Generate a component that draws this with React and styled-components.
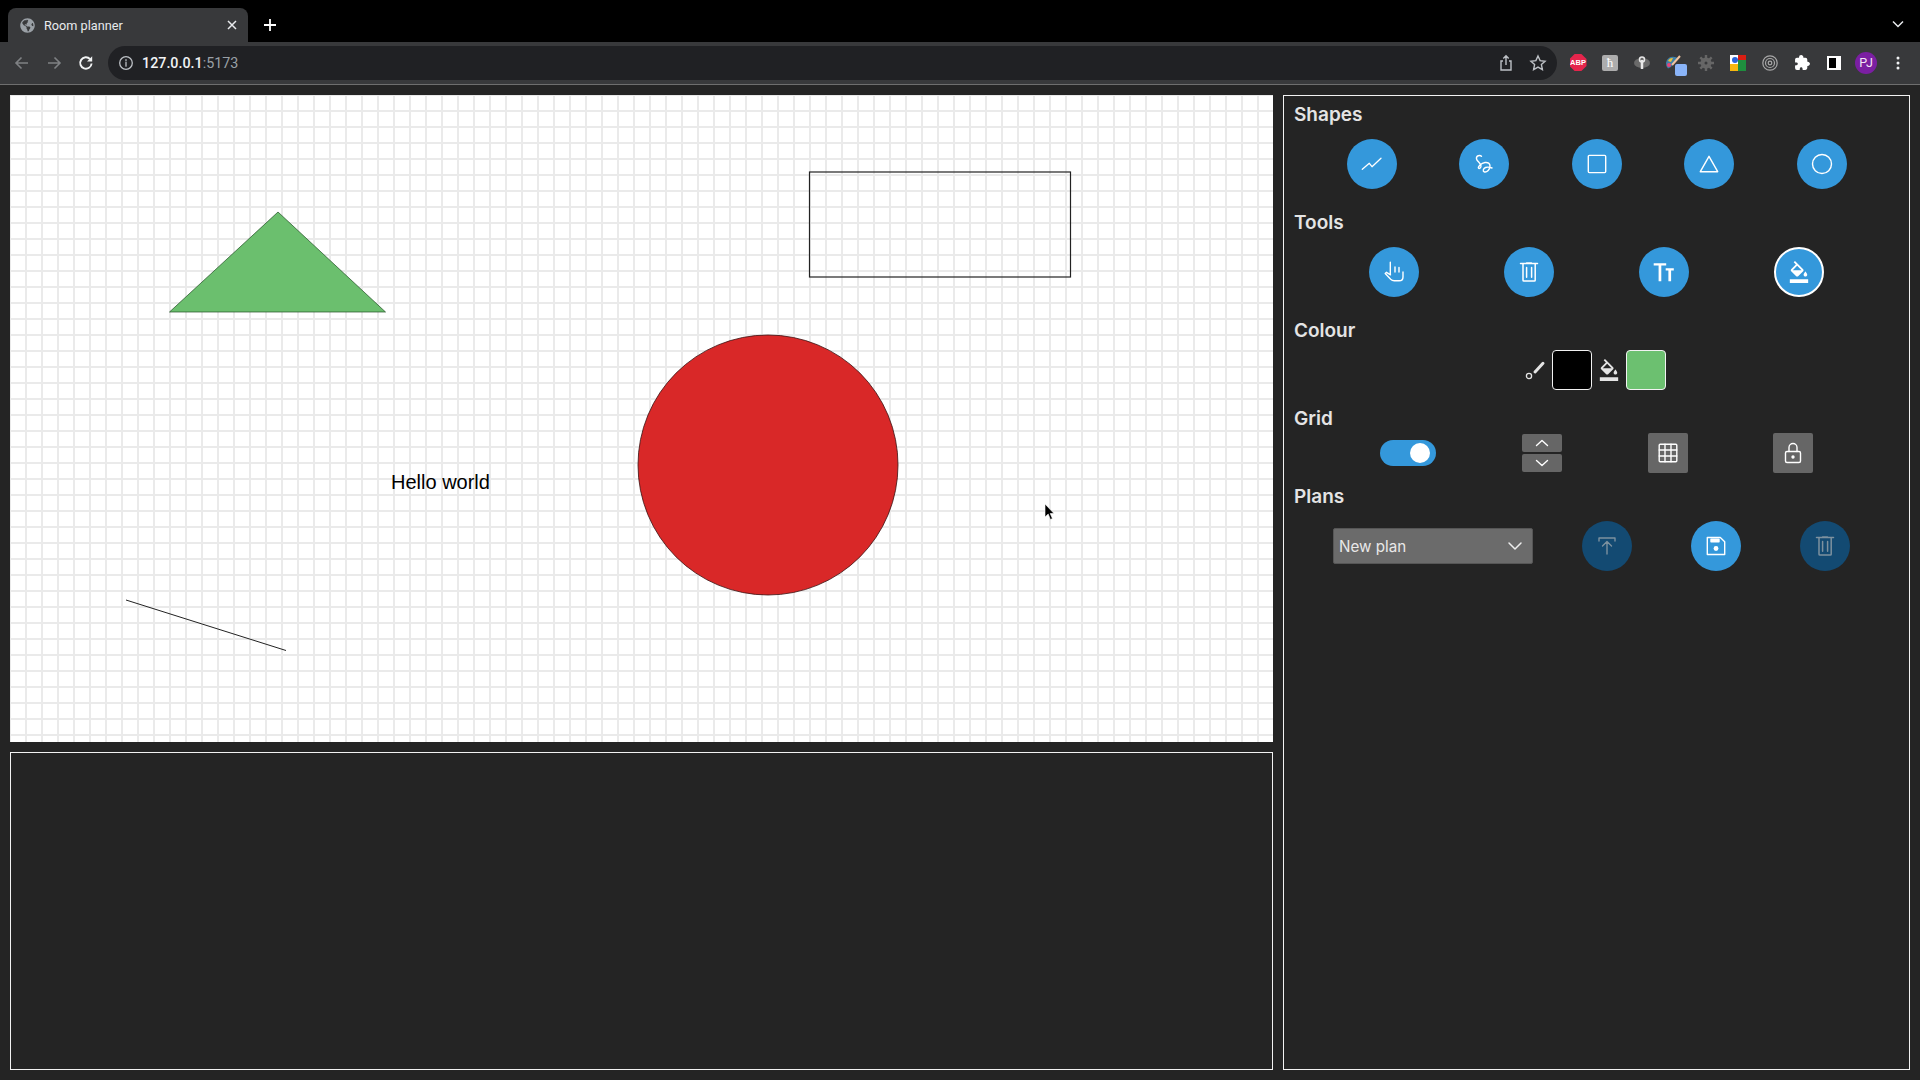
import React from "react";
import styled, { createGlobalStyle } from "styled-components";
import { MdFormatColorFill } from "react-icons/md";
import { FaGlobeAmericas } from "react-icons/fa";
import { IoExtensionPuzzle } from "react-icons/io5";

const Global = createGlobalStyle`
  html, body { margin: 0; padding: 0; background: #242424; }
  body { font-family: Inter, "Noto Sans", sans-serif; overflow: hidden; }
  * { box-sizing: border-box; }
`;

const Window = styled.div`
  width: 1920px;
  height: 1080px;
  display: flex;
  flex-direction: column;
`;

const TabStrip = styled.div`
  height: 42px;
  background: #000;
  display: flex;
  align-items: flex-end;
  padding-left: 8px;
`;

const Tab = styled.div`
  width: 240px;
  height: 34px;
  background: #38393b;
  border-radius: 8px 8px 0 0;
  display: flex;
  align-items: center;
  padding: 0 5px 0 12px;
  color: #e8eaed;
  font: 400 12.7px Roboto, sans-serif;
  svg { color: #9aa0a6; margin-right: 9px; }
`;

const TabTitle = styled.span`
  flex: 1;
`;

const TabClose = styled.svg`
  width: 10px;
  height: 10px;
  margin: 0 6px 0 0 !important;
  color: #e8eaed !important;
`;

const NewTab = styled.svg`
  width: 14px;
  height: 14px;
  margin: 0 0 10px 15px;
`;

const TabMenu = styled.svg`
  width: 12px;
  height: 8px;
  margin: 0 16px 14px auto;
`;

const Toolbar = styled.div`
  height: 43px;
  background: #38393b;
  border-bottom: 1px solid #6e6e6e;
  display: flex;
  align-items: center;
  padding: 0 6px 1px 0;
`;

const NavButton = styled.svg`
  width: 18px;
  height: 18px;
  margin-left: ${(p) => p.$left}px;
  color: ${(p) => p.$color};
  flex: none;
`;

const UrlBar = styled.div`
  margin-left: 13px;
  width: 1449px;
  height: 34px;
  border-radius: 17px;
  background: #202124;
  display: flex;
  align-items: center;
  padding: 0 0 0 10px;
  flex: none;
`;

const UrlHost = styled.span`
  margin-left: 8px;
  font: 500 14.3px Roboto, sans-serif;
  color: #f1f3f4;
  flex: 1;
  span { color: #9aa0a6; font-weight: 400; }
`;

const UrlAction = styled.svg`
  width: 18px;
  height: 18px;
  margin-right: 14px;
  color: #bdc1c6;
  &:last-child { margin-right: 10px; }
`;

const Extensions = styled.div`
  display: flex;
  margin-left: 5px;
`;

const Slot = styled.div`
  width: 32px;
  height: 32px;
  display: flex;
  align-items: center;
  justify-content: center;
  position: relative;
`;

const AbpBadge = styled.div`
  width: 17px;
  height: 17px;
  background: #e5254c;
  clip-path: polygon(30% 0, 70% 0, 100% 30%, 100% 70%, 70% 100%, 30% 100%, 0 70%, 0 30%);
  color: #fff;
  font: 700 7.5px "Liberation Sans", sans-serif;
  display: flex;
  align-items: center;
  justify-content: center;
`;

const KeyBadge = styled.div`
  width: 16px;
  height: 16px;
  border-radius: 2px;
  background: #adadad;
  color: #fff;
  font: 400 13px "Liberation Serif", serif;
  display: flex;
  align-items: center;
  justify-content: center;
`;

const CountBadge = styled.div`
  position: absolute;
  left: 17px;
  top: 17px;
  width: 12px;
  height: 12px;
  border-radius: 2px;
  background: #8ab4f8;
`;

const Avatar = styled.div`
  width: 22px;
  height: 22px;
  border-radius: 50%;
  background: #7b1fa2;
  color: #f3e5f5;
  font: 400 12.5px Roboto, sans-serif;
  display: flex;
  align-items: center;
  justify-content: center;
`;

const SidePanelGlyph = styled.div`
  width: 14px;
  height: 14px;
  background: #000;
  border: 2px solid #fff;
  border-right-width: 5px;
`;

const Page = styled.div`
  flex: 1;
  min-height: 0;
  background: #242424;
  padding: 10px;
  display: grid;
  grid-template-columns: 1263px 627px;
  grid-template-rows: 647px 1fr;
  gap: 10px;
`;

const Canvas = styled.div`
  position: relative;
  background-color: #fff;
  background-image:
    linear-gradient(#eaeaea 2px, transparent 2px),
    linear-gradient(90deg, #eaeaea 2px, transparent 2px);
  background-size: 16px 16px;
  background-position: 15px 15px;
  overflow: hidden;
`;

const CanvasDrawing = styled.svg`
  position: absolute;
  inset: 0;
  width: 100%;
  height: 100%;
`;

const CanvasText = styled.span`
  position: absolute;
  left: 381px;
  top: 375px;
  font: 400 20px/24px "Liberation Sans", Arial, sans-serif;
  color: #000;
`;

const Cursor = styled.svg`
  position: absolute;
  left: 1034px;
  top: 408px;
  width: 12px;
  height: 18px;
`;

const Console = styled.div`
  border: 1px solid #f2f2f2;
  background: #242424;
`;

const SidePanel = styled.div`
  grid-column: 2;
  grid-row: 1 / span 2;
  border: 1px solid #f2f2f2;
  background: #242424;
  padding-top: 8px;
`;

const Heading = styled.h2`
  margin: 0 0 0 10px;
  font: 600 19px/22px Inter, sans-serif;
  color: #e4e4e4;
`;

const EvenRow = styled.div`
  display: flex;
  justify-content: space-evenly;
  align-items: center;
  margin: 13px 0 23px;
`;

const ColourRow = styled.div`
  display: flex;
  justify-content: center;
  align-items: center;
  margin: 8px 0 18px;
  padding-right: 6px;
`;

const GridRow = styled.div`
  display: flex;
  align-items: center;
  gap: 85.7px;
  padding-left: 96.3px;
  margin: 3px 0 13px;
`;

const PlansRow = styled.div`
  display: flex;
  align-items: center;
  gap: 59px;
  padding-left: 49px;
  margin-top: 13px;
`;

const RoundButton = styled.button`
  width: 50px;
  height: 50px;
  border-radius: 50%;
  padding: 0;
  border: ${(p) => (p.$active ? "2px solid #fff" : "none")};
  background: ${(p) => (p.$dim ? "#134a72" : "#3498db")};
  color: ${(p) => (p.$dim ? "#7d919f" : "#fff")};
  display: flex;
  align-items: center;
  justify-content: center;
  flex: none;
`;

const Icon = styled.svg`
  width: ${(p) => p.$size || 24}px;
  height: ${(p) => p.$size || 24}px;
  fill: none;
  stroke: currentColor;
  stroke-width: ${(p) => p.$weight || 1.5};
  stroke-linecap: round;
  stroke-linejoin: round;
  flex: none;
`;

const SolidIcon = styled(Icon)`
  fill: currentColor;
  stroke: none;
`;

const Swatch = styled.div`
  width: 40px;
  height: 40px;
  border: 1px solid #f2f2f2;
  border-radius: 4px;
  background: ${(p) => p.$color};
  margin: 0 ${(p) => p.$right || 0}px 0 ${(p) => p.$left || 4}px;
`;

const ColourGlyph = styled.div`
  width: 24px;
  height: 24px;
  color: #e4e4e4;
  display: flex;
  align-items: center;
  justify-content: center;
`;

const BrushGlyph = styled(ColourGlyph)`
  margin-right: 2px;
`;

const Toggle = styled.div`
  width: 56px;
  height: 26px;
  border-radius: 13px;
  background: #3498db;
  display: flex;
  align-items: center;
  justify-content: flex-end;
  padding-right: 6px;
`;

const Knob = styled.div`
  width: 20px;
  height: 20px;
  border-radius: 50%;
  background: #fff;
`;

const Stepper = styled.div`
  display: flex;
  flex-direction: column;
  gap: 2px;
`;

const StepButton = styled.button`
  width: 40px;
  height: 18px;
  padding: 0;
  border: none;
  border-radius: 2px;
  background: #666;
  color: #fff;
  display: flex;
  align-items: center;
  justify-content: center;
`;

const SquareButton = styled.button`
  width: 40px;
  height: 40px;
  padding: 0;
  border: none;
  border-radius: 2px;
  background: #666;
  color: #fff;
  display: flex;
  align-items: center;
  justify-content: center;
`;

const SelectWrap = styled.div`
  position: relative;
  width: 200px;
  height: 36px;
  margin-right: -10px;
  flex: none;
  color: #eee;
  svg { position: absolute; right: 9px; top: 9px; pointer-events: none; }
`;

const PlanSelect = styled.select`
  width: 100%;
  height: 100%;
  appearance: none;
  background: #6b6b6b;
  border: 1px solid #565656;
  border-radius: 2px;
  color: #e8e8e8;
  font: 400 15.2px Inter, sans-serif;
  padding: 0 0 0 5px;
`;

const TrashIcon = () => (
  <Icon viewBox="0 0 24 24" $weight={1.5}>
    <path d="M3.500 3.600h17M6 3.600v16.600c0 .5.4.9.9.9h10.400c.5 0 .9-.4.9-.9V3.600M9.500 3.600v-.5h5v.5M9.600 7.500v9.800M14.600 7.500v9.800" />
  </Icon>
);

function App() {
  return (
    <Window>
      <Global />
      <TabStrip>
        <Tab>
          <FaGlobeAmericas size={15} />
          <TabTitle>Room planner</TabTitle>
          <TabClose viewBox="0 0 10 10">
            <path d="M1 1l8 8M9 1l-8 8" stroke="currentColor" strokeWidth="1.5" />
          </TabClose>
        </Tab>
        <NewTab viewBox="0 0 14 14">
          <path d="M7 1v12M1 7h12" stroke="#fff" strokeWidth="1.8" />
        </NewTab>
        <TabMenu viewBox="0 0 12 8">
          <path d="M1 1.500l5 5 5-5" fill="none" stroke="#e8eaed" strokeWidth="1.5" />
        </TabMenu>
      </TabStrip>

      <Toolbar>
        <NavButton $left={13} $color="#7f8184" viewBox="0 0 18 18">
          <path d="M15 9H3.500M8.500 3.500L3 9l5.500 5.500" fill="none" stroke="currentColor" strokeWidth="1.6" />
        </NavButton>
        <NavButton $left={14} $color="#7f8184" viewBox="0 0 18 18">
          <path d="M3 9h11.500M9.500 3.500L15 9l-5.500 5.500" fill="none" stroke="currentColor" strokeWidth="1.6" />
        </NavButton>
        <NavButton $left={14} $color="#f1f3f4" viewBox="0 0 18 18">
          <path d="M14.600 9.500a5.700 5.700 0 1 1-1.500-4.400" fill="none" stroke="currentColor" strokeWidth="1.9" />
          <path d="M15.200 2.200v5.200H10z" fill="currentColor" />
        </NavButton>
        <UrlBar>
          <Icon $size={16} $weight={1.3} viewBox="0 0 16 16" style={{ color: "#bdc1c6" }}>
            <circle cx="8" cy="8" r="6.300" />
            <path d="M8 7.200v4M8 4.600v1" />
          </Icon>
          <UrlHost>127.0.0.1<span>:5173</span></UrlHost>
          <UrlAction viewBox="0 0 18 18">
            <path d="M6 7H4v9h10V7h-2M9 11V2M6.300 4.500L9 1.800l2.700 2.700" fill="none" stroke="currentColor" strokeWidth="1.4" />
          </UrlAction>
          <UrlAction viewBox="0 0 18 18">
            <path d="M9 2l2.100 4.600 5 .6-3.700 3.400 1 5L9 13.100l-4.400 2.500 1-5L1.900 7.200l5-.6z" fill="none" stroke="currentColor" strokeWidth="1.4" />
          </UrlAction>
        </UrlBar>
        <Extensions>
          <Slot><AbpBadge>ABP</AbpBadge></Slot>
          <Slot><KeyBadge>ħ</KeyBadge></Slot>
          <Slot>
            <svg width="18" height="14" viewBox="0 0 18 14">
              <ellipse cx="9" cy="7" rx="8" ry="5" fill="#6a6a6a" />
              <path d="M9 4v9" stroke="#e8e8e8" strokeWidth="2.5" />
              <circle cx="9" cy="3.500" r="2.500" fill="none" stroke="#e8e8e8" strokeWidth="1.5" />
            </svg>
          </Slot>
          <Slot>
            <svg width="18" height="18" viewBox="0 0 18 18">
              <path d="M1 9a7 7 0 0 1 9-6l3 1-4 5-3 4-3 1.500A7 7 0 0 1 1 9z" fill="#3f7fa8" />
              <path d="M3 7a5 5 0 0 1 5-3L6 8z" fill="#e8c33a" />
              <path d="M15 2L7 11" stroke="#f2c4a0" strokeWidth="2" />
              <circle cx="4" cy="11" r="2" fill="#e8447a" />
            </svg>
            <CountBadge />
          </Slot>
          <Slot>
            <svg width="16" height="16" viewBox="0 0 16 16">
              <circle cx="8" cy="8" r="5.500" fill="#666" />
              <path d="M8 0v16M0 8h16M2.300 2.300l11.400 11.400M13.700 2.300L2.300 13.700" stroke="#666" strokeWidth="2.4" />
              <circle cx="8" cy="8" r="1.500" fill="#38393b" />
            </svg>
          </Slot>
          <Slot>
            <svg width="16" height="16" viewBox="0 0 16 16">
              <rect width="16" height="16" fill="#fff" />
              <path d="M8 0h8v5H8z" fill="#d81e12" />
              <path d="M8 5h8v11H8z" fill="#1e8e3e" />
              <path d="M0 9h8v7H0z" fill="#f6b60f" />
              <circle cx="5" cy="5" r="3" fill="#2a63d8" />
            </svg>
          </Slot>
          <Slot>
            <svg width="16" height="16" viewBox="0 0 16 16" fill="none" stroke="#a8a8a8" strokeWidth="1.2">
              <circle cx="8" cy="8" r="7.200" />
              <circle cx="8" cy="8" r="4.500" />
              <circle cx="8" cy="8" r="1.800" />
            </svg>
          </Slot>
          <Slot><IoExtensionPuzzle size={17} color="#fff" /></Slot>
          <Slot><SidePanelGlyph /></Slot>
          <Slot><Avatar>PJ</Avatar></Slot>
          <Slot>
            <svg width="4" height="14" viewBox="0 0 4 14" fill="#f1f3f4">
              <circle cx="2" cy="2" r="1.500" />
              <circle cx="2" cy="7" r="1.500" />
              <circle cx="2" cy="12" r="1.500" />
            </svg>
          </Slot>
        </Extensions>
      </Toolbar>

      <Page>
        <Canvas>
          <CanvasDrawing viewBox="0 0 1263 647">
            <polygon points="268,117 159.500,217 375.500,217" fill="#6bbf6e" stroke="#1f4d22" strokeWidth="0.7" />
            <rect x="799.500" y="77" width="261" height="105" fill="none" stroke="#222" strokeWidth="1.2" />
            <circle cx="758" cy="370" r="130" fill="#d92828" stroke="#3a1010" strokeWidth="0.8" />
            <line x1="116" y1="505" x2="276" y2="555.500" stroke="#222" strokeWidth="1" />
          </CanvasDrawing>
          <CanvasText>Hello world</CanvasText>
          <Cursor viewBox="0 0 12 18">
            <path d="M1 1v13l3.200-3 2.200 5.500 2-1-2.200-5H10z" fill="#000" stroke="#fff" strokeWidth="0.6" />
          </Cursor>
        </Canvas>

        <SidePanel>
          <Heading>Shapes</Heading>
          <EvenRow>
            <RoundButton>
              <Icon viewBox="0 0 24 24" $weight={1.3}><path d="M2.300 17.300l7-6 2.700 3.400 9-8.400" /></Icon>
            </RoundButton>
            <RoundButton>
              <Icon viewBox="0 0 24 24" $weight={1.4}>
                <path d="M9.500 4.300C8 2.800 4 3.500 4.500 6.800 5 9.500 9 11 9 14c0 2-1.800 3.200-2.500 2.200C5.800 15 9 11 13 10.500c3-.4 5 1 5 3.500 0 3.500-3 6.500-5.500 6-2-.4-1.500-3.500 1-4.500 2-.8 4.500-.3 6.500.5" />
              </Icon>
            </RoundButton>
            <RoundButton>
              <Icon viewBox="0 0 24 24" $weight={1.4}><rect x="3.300" y="3.400" width="17.400" height="17.200" rx="1" /></Icon>
            </RoundButton>
            <RoundButton>
              <Icon viewBox="0 0 24 24" $weight={1.4}><path d="M12 4.300l8.700 15.400H3.300z" /></Icon>
            </RoundButton>
            <RoundButton>
              <Icon viewBox="0 0 24 24" $weight={1.4}><circle cx="12" cy="12" r="9.500" /></Icon>
            </RoundButton>
          </EvenRow>

          <Heading>Tools</Heading>
          <EvenRow>
            <RoundButton>
              <Icon viewBox="0 0 24 24" $weight={1.4}>
                <path d="M8.300 14.500V2.300M13 7v5M17 7.500v4.500M21 12v5c0 2.500-1.500 3.800-3.800 3.800h-5c-1.500 0-2.500-.5-3.500-1.500l-5.500-5.800 1.300-1.200 4 2.500" />
              </Icon>
            </RoundButton>
            <RoundButton><TrashIcon /></RoundButton>
            <RoundButton>
              <SolidIcon viewBox="0 0 24 24">
                <path d="M1.700 3.300h12.500v2.200H9.300v15.800H6.600V5.500H1.700zM13.700 8.300h8.100v2.300h-2.700v10.700h-2.700V10.600h-2.700z" />
              </SolidIcon>
            </RoundButton>
            <RoundButton $active>
              <MdFormatColorFill size={22} />
            </RoundButton>
          </EvenRow>

          <Heading>Colour</Heading>
          <ColourRow>
            <BrushGlyph>
              <Icon viewBox="0 0 24 24" $size={24} $weight={1.3}>
                <path d="M21 5.300L13 14" strokeWidth="3" />
                <circle cx="7" cy="18" r="2.600" />
              </Icon>
            </BrushGlyph>
            <Swatch $color="#000" $right={5} />
            <ColourGlyph><MdFormatColorFill size={22} /></ColourGlyph>
            <Swatch $color="#6cc070" $left={5} />
          </ColourRow>

          <Heading>Grid</Heading>
          <GridRow>
            <Toggle><Knob /></Toggle>
            <Stepper>
              <StepButton>
                <Icon viewBox="0 0 14 8" $size={14} $weight={1.4}><path d="M1.500 6.500L7 1.500l5.500 5" /></Icon>
              </StepButton>
              <StepButton>
                <Icon viewBox="0 0 14 8" $size={14} $weight={1.4}><path d="M1.500 1.500L7 6.500l5.500-5" /></Icon>
              </StepButton>
            </Stepper>
            <SquareButton>
              <Icon viewBox="0 0 24 24" $weight={1.4}>
                <rect x="3.200" y="3.200" width="17.600" height="17.600" rx="1" />
                <path d="M9 3.200v17.600M15 3.200v17.600M3.200 9h17.600M3.200 15h17.600" />
              </Icon>
            </SquareButton>
            <SquareButton>
              <Icon viewBox="0 0 24 24" $weight={1.4}>
                <rect x="4.500" y="10.500" width="15" height="11" rx="1.500" />
                <path d="M8 10.500V6.500a4 4 0 0 1 8 0v4" />
                <circle cx="12" cy="16" r="1" fill="currentColor" />
              </Icon>
            </SquareButton>
          </GridRow>

          <Heading>Plans</Heading>
          <PlansRow>
            <SelectWrap>
              <PlanSelect defaultValue="new">
                <option value="new">New plan</option>
              </PlanSelect>
              <Icon viewBox="0 0 18 18" $size={18} $weight={1.5}><path d="M3 6l6 6 6-6" /></Icon>
            </SelectWrap>
            <RoundButton $dim>
              <Icon viewBox="0 0 24 24" $weight={1.4}>
                <path d="M4 7V4h16v3M12 20V7.500M7.500 12L12 7.500l4.500 4.500" />
              </Icon>
            </RoundButton>
            <RoundButton>
              <Icon viewBox="0 0 24 24" $weight={1.4}>
                <path d="M3.300 3.500h13l4.400 4.200v12.800H3.300z" />
                <path d="M7 5.300h8v2.400H7z" fill="currentColor" />
                <circle cx="12" cy="14.500" r="2.400" fill="currentColor" stroke="none" />
              </Icon>
            </RoundButton>
            <RoundButton $dim><TrashIcon /></RoundButton>
          </PlansRow>
        </SidePanel>

        <Console />
      </Page>
    </Window>
  );
}

export default App;
